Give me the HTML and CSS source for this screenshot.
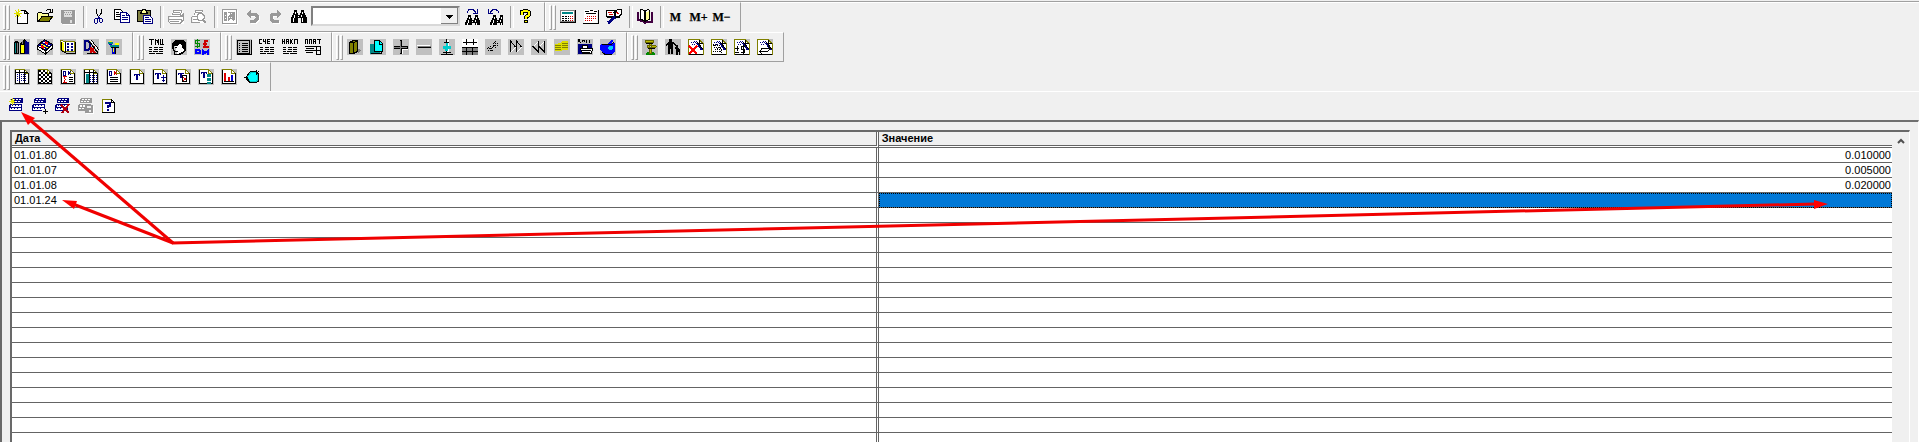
FILE: index.html
```html
<!DOCTYPE html>
<html lang="ru">
<head>
  <meta charset="UTF-8">
  <meta name="viewport" content="width=device-width, initial-scale=1.0">
  <title>История значения</title>
  <link rel="stylesheet" href="styles.css">
</head>
<body>
  <!-- shared icon parts -->
  <svg class="sprite" aria-hidden="true">
    <symbol id="page" viewBox="0 0 16 16"><path fill="#c0c0c0" d="M0 0h16v16H0z"/><path fill="#fff" d="M2 1h9l3 3v11H2z"/><path class="k" d="M1.500 0v14.500h13V4"/><path class="o" d="M1 .5h10M10.500 1v3.500H14M11.500 1.500L14 4"/></symbol>
    <symbol id="sheet" viewBox="0 0 16 16"><path fill="#c0c0c0" d="M0 0h16v16H0z"/><path fill="#fff" d="M1 1h10l4 4v10H1z"/><path class="o" d="M.5 16V.5H11l4 4V16"/><path class="k" d="M1 15.500h14M11 1v3h4"/></symbol>
    <symbol id="binoc" viewBox="0 0 16 16"><path d="M3 1h3v3h1v2h2V4h1V1h3v3h1v2h1v2h1v6h-6V9H7v5H0V8h1V6h1V4h1z"/><path class="w" d="M4.500 3v2M3.500 6v3M2.500 9v4M11.500 3v2M10.500 6v2M11.500 9v4M7 7.500h1"/></symbol>
    <symbol id="rows" viewBox="0 0 16 16"><path fill="#000080" d="M3 0h11v5H2V2zM1 6h12v7H0V8z"/><path class="w" stroke-dasharray="2 1" d="M4 1.500h9M3 3.500h9"/><path fill="#fff" d="M2 7h10v2H2zM1 10h11v2H1z"/><path class="n" stroke-dasharray="1 2" d="M3 7.500h9M2 10.500h9"/></symbol>
    <symbol id="lines" viewBox="0 0 16 16"><path class="k" d="M1 8.500h3M6 8.500h4M11 8.500h4M1 10.500h3M6 10.500h4M11 10.500h4M1 12.500h3M5 12.500h5M11 12.500h4M1 14.500h6M8 14.500h7"/></symbol>
    <symbol id="wand" viewBox="0 0 16 16"><use href="#sheet"/><path class="n2" d="M9 4l5 7"/><path class="k" d="M9.500 3l5 7"/><path class="n" stroke-dasharray="1 1" d="M3 3.500h6M4 5.500h4M6 2.500h4"/></symbol>
  </svg>

  <div class="app">
    <div class="toolbars">
      <div class="toolbar-row">
        <div class="band">
          <span class="grip"></span>
          <button aria-label="Создать"><svg viewBox="0 0 16 16"><path fill="#fff" d="M4 2h7l3 3v10H4z"/><path class="k" d="M3.500 6v8.500h10V4.500M7 1.500h4l3 3h-3.500V2"/><path class="y" d="M0 4.500h8M4.500 0v8M1 1l6 7M7 1L1 8"/></svg></button>
          <button aria-label="Открыть"><svg viewBox="0 0 16 16"><path fill="#ff9" d="M1 4h4l1 1h6v8H1z"/><path fill="#808000" d="M4 8h12l-4 5H1z"/><path class="k" d="M.5 13V4.500l1-1h3l1 1h6V8M4 7.500h12M4.500 8L1 13M15.500 7.500L12 12.500H.5M9 1.500l2-1h2l1 2M15.500 0v3H12"/></svg></button>
          <button aria-label="Сохранить" disabled><svg viewBox="0 0 16 16"><path fill="#fff" d="M2 2h14v14H3z"/><path fill="#999" d="M1 1h14v14H2l-1-1z"/><path fill="#ddd" d="M4 2h8v6H4zM10 11h2v3h-2z"/><path stroke="#999" stroke-dasharray="1 1" d="M4 3.500h8M5 5.500h7"/></svg></button>
          <span class="sep"></span>
          <button aria-label="Вырезать"><svg viewBox="0 0 16 16"><path class="k" d="M5.500 0v4l2 4M10.500 0v4l-3 4"/><path class="n" d="M7.500 7v3M5.500 9.500h-1l-1 1v3l1 1h1l1-1v-3l1-2 2 1h1l1 1v2l-1 1h-1l-1-1v-3"/></svg></button>
          <button aria-label="Копировать"><svg viewBox="0 0 16 16"><path fill="#fff" stroke="#000" d="M.5.500h6l3 3v7h-9z"/><path class="k" d="M2 3.500h3M2 5.500h5M2 7.500h4"/><path fill="#fff" stroke="#000080" d="M6.500 3.500h6l3 3v7h-9z"/><path class="n" d="M12.500 4v2.500H15M8 6.500h3M8 8.500h6M8 10.500h6"/></svg></button>
          <button aria-label="Вставить"><svg viewBox="0 0 16 16"><path fill="#808040" stroke="#000" d="M.5 1.500h13v11H.5z"/><path fill="#ff9" stroke="#000" d="M3.500 3.500h1l1-3h3l1 3h1v1h-7z"/><path fill="#fff" stroke="#000080" d="M6.500 6.500h6l3 3v5h-9z"/><path class="n" d="M8 8.500h4M8 10.500h6M8 12.500h6"/></svg></button>
          <span class="sep"></span>
          <button aria-label="Печать" disabled><svg viewBox="0 0 16 16"><path fill="#fff" d="M5 2h10l-1 5 2 2v6H2V8z"/><path class="g" d="M4.500 6l1-4.500h8L12.500 7M6 3.500h6M5 5.500h7M1 7.500h12l2-2v6l-3 3H2.500l-2-2v-4zM1 10.500h12v3M2 12.500h9M13 8l2-1"/></svg></button>
          <button aria-label="Просмотр" disabled><svg viewBox="0 0 16 16"><path fill="#fff" d="M4 2h8l-1 5 3 2v5H2V8z"/><path class="g" d="M3.500 6l1-4.500h7L10.500 5M5 3.500h5M1 7.500h5M.5 8v5.500h8M2 10.500h4M8 4.500h3l2 2v3l-2 2H8l-2-2v-3z"/><path stroke="#999" stroke-width="2" d="M12 11l3 3"/></svg></button>
          <span class="sep"></span>
          <button aria-label="Описание" disabled><svg viewBox="0 0 16 16"><path fill="#fff" d="M1 1h15v15H1z"/><path class="g" d="M.5.500h14v14H.5z"/><path fill="#999" d="M2 3h3v9H2zM6 3h7v7l-2 2-2-2-3 2V7l2-1z"/><path stroke="#fff" stroke-dasharray="1 1" d="M7 4.500h4M3 6.500h3M3 9.500h4M7 8.500h4"/></svg></button>
          <button aria-label="Отменить" disabled><svg viewBox="0 0 16 16"><path fill="none" stroke="#fff" stroke-width="3" d="M6 6h5l2 2v3l-2 2H6"/><path fill="none" stroke="#999" stroke-width="3" d="M5 5h5l2 2v3l-2 2H5"/><path fill="#999" d="M1 5l5-4v8z"/></svg></button>
          <button aria-label="Вернуть" disabled><svg viewBox="0 0 16 16"><path fill="none" stroke="#fff" stroke-width="3" d="M11 6H6L4 8v3l2 2h6"/><path fill="none" stroke="#999" stroke-width="3" d="M10 5H5L3 7v3l2 2h6"/><path fill="#999" d="M14 5L9 1v8z"/></svg></button>
          <button aria-label="Найти"><svg viewBox="0 0 16 16"><use href="#binoc"/></svg></button>
          <select class="search" aria-label="Строка поиска"><option></option></select>
          <button aria-label="Найти следующий"><svg viewBox="0 0 16 16"><path class="n" d="M3.500 4V2.500L5 .5h4l3 3M13.500 0v4H9"/><svg x="1" y="5" width="12" height="11" viewBox="0 0 16 16" preserveAspectRatio="none"><use href="#binoc"/></svg></svg></button>
          <button aria-label="Найти предыдущий"><svg viewBox="0 0 16 16"><path class="n" d="M1.500 0v4H6M3 3.500l3-3h3l2.500 2V4"/><svg x="3" y="5" width="12" height="11" viewBox="0 0 16 16" preserveAspectRatio="none"><use href="#binoc"/></svg></svg></button>
          <span class="sep"></span>
          <button aria-label="Помощь"><svg viewBox="0 0 16 16"><path fill="none" stroke="#000" stroke-width="4" d="M4 6V3l2-1h3l2 1v3L8 8v2"/><path fill="none" stroke="#ff0" stroke-width="2" d="M4 6V3l2-1h3l2 1v3L8 8v2"/><path fill="#ff0" stroke="#000" d="M6.500 11.500h3v2h-3z"/></svg></button>
        </div>
        <div class="band">
          <span class="grip"></span>
          <button aria-label="Калькулятор"><svg viewBox="0 0 16 16"><path fill="#fff" stroke="#808080" d="M.5 1.500h14v11H.5z"/><path class="k" d="M0 13.500h15.500V1"/><path fill="#088" d="M2 3h11v2H2z"/><path class="k" stroke-dasharray="2 1" d="M2 7.500h7M2 9.500h7M2 11.500h7"/><path class="r" stroke-dasharray="1 1" d="M10 7.500h4M10 9.500h4M10 11.500h4"/></svg></button>
          <button aria-label="Календарь"><svg viewBox="0 0 16 16"><path fill="#fff" d="M1 1h13v13H1z"/><path class="k" d="M0 14.500h15.500V1M2 2.500h4M7 1.500h3M11 2.500h3M3 4.500h10"/><path class="r" stroke-dasharray="1 1" d="M4 7.500h9M2 9.500h11M2 11.500h8"/></svg></button>
          <button aria-label="Табло"><svg viewBox="0 0 16 16"><path fill="#fff" stroke="#000" d="M.5 1.500h9v6h-9z"/><path fill="#fff" stroke="#000" d="M9.500 2.500l2-2h4v5l-2 2h-4z"/><path class="r" d="M2 3.500h4M3 5.500h4M10 3l3 2"/><path class="k" d="M8 1v6M7 4l4-2M12 8l3-3M1 8.500h13"/><path stroke="#000080" stroke-width="3" d="M2 14l7-6"/></svg></button>
          <span class="sep"></span>
          <button aria-label="Справка"><svg viewBox="0 0 16 16"><path fill="#fff" d="M3 1l5 2 5-2v10l-5 2-5-2z"/><path stroke="#400040" fill="none" stroke-width="2" d="M1 3v8l5 1 2 2 2-1h5V3"/><path class="k" d="M3.500 0v10l4 2V2l-3-2M12.500 1v9l-4 2V2l3-2"/><path fill="#ff9" d="M9 3l3-1v8l-3 1z"/></svg></button>
          <span class="sep"></span>
          <button class="mem">M</button>
          <button class="mem">M+</button>
          <button class="mem">M−</button>
        </div>
      </div>

      <div class="toolbar-row">
        <div class="band">
          <span class="grip"></span>
          <button aria-label="План счетов"><svg viewBox="0 0 16 16"><path class="bg" d="M0 0h16v16H0z"/><path fill="#000" d="M0 3l2-1 3 1v12H0zM6 4l4-4 2 1v14H6z"/><path fill="#000080" d="M11 2l4 1v12h-4z"/><path fill="#088" d="M1 4h1v10H1z"/><path fill="#808080" d="M3 4h1v10H3zM8 2h1v3H8z"/><path fill="#ff0" d="M7 6h3v8H7z"/></svg></button>
          <button aria-label="Журнал операций"><svg viewBox="0 0 16 16"><path class="bg" d="M0 0h16v16H0z"/><path fill="#000080" stroke="#000" d="M.5 6.500l7-6 8 5-7 6z"/><path fill="#fff" stroke="#000" d="M.5 7v3l8 5v-3zM8.500 12v3l7-6V6z"/><path stroke="#ff0" d="M4 5l7 4"/><path stroke="#fff" d="M6 3l7 4M2 7l6 3"/><path stroke="#f00" stroke-width="2" d="M8 3l3 2M4 7l3 2"/></svg></button>
          <button aria-label="Журнал проводок"><svg viewBox="0 0 16 16"><path class="bg" d="M0 0h16v16H0z"/><path fill="#fff" stroke="#808000" d="M.5 1.500l5 1h9v10h-9l-5-2z"/><path class="k" d="M5.500 3v11M1 11.500l5 2.500h9.500V3M1 3v8"/><path class="n2" stroke-dasharray="2 2" d="M7 5h7M7 8h7M7 11h7"/><path fill="#ff0" d="M2 3l2 1v8l-2-1z"/></svg></button>
          <button aria-label="Проводки"><svg viewBox="0 0 16 16"><path class="bg" d="M0 0h16v16H0z"/><path stroke="#000080" fill="none" stroke-width="2" d="M2 2v9M1 2h4l2 2v5l-2 2H1"/><path stroke="#c00" stroke-width="2" d="M8 15V8M8 12l4-4M9 11l4 4"/><path class="k" d="M8 1l8 10M6 2l9 12M4 14.500h11"/><path class="w" d="M7 1l8 10"/></svg></button>
          <button aria-label="Типовые операции"><svg viewBox="0 0 16 16"><path class="bg" d="M0 0h16v16H0z"/><path fill="#088" d="M2 3h5v2H2zM4 6h9v2H4z"/><path fill="#00c" d="M6 8h3v7H6zM3 5h3v1H3z"/><path fill="#ff0" d="M3 2h3v1H3zM9 4h4v2H9zM7 9h1v4H7z"/><path class="k" d="M5 8.500h8M9.500 9v6"/></svg></button>
        </div>
        <div class="band">
          <span class="grip"></span>
          <button aria-label="ТМЦ"><svg viewBox="0 0 16 16"><path class="k" d="M1 .5h5M3.500 1v5M7.500 6V0M7 1.500h2l0 2 1-2M10.500 0v6M12.500 0v5.500h3M14.500 0v6"/><use href="#lines"/></svg></button>
          <button aria-label="Контрагенты"><svg viewBox="0 0 16 16"><path class="bg" d="M0 0h16v16H0z"/><path fill="#fff" d="M3 3h10v9l-3 3H6z"/><path d="M1 5l3-4h8l3 3v8l-3 2 1-4-2-1V6L9 5 6 7H3v3H1z"/><path class="k" d="M2.500 8v3l1 1v3h5l3-2M4 12.500h3M4 8.500h2M12 14l-4 2"/></svg></button>
          <button aria-label="Валюты"><svg viewBox="0 0 16 16"><path class="bg" d="M0 0h16v16H0z"/><path stroke="#080" fill="none" d="M6 1.500H1.500v3h4v3H1M3.500 0v9"/><path stroke="#c00" fill="none" stroke-width="2" d="M14 2h-3v5l-2 1h6M9 5h4"/><path fill="none" stroke="#00f" stroke-width="2" d="M1 11h4l1 1v2H2v-3M9 16v-4l2 2 3-2v4"/></svg></button>
        </div>
        <div class="band">
          <span class="grip"></span>
          <button aria-label="Журнал"><svg viewBox="0 0 16 16"><path class="bg" d="M0 0h16v16H0z"/><path class="k" d="M1.500 1.500h12v13h-12zM3 4.500h1M6 4.500h6M3 6.500h1M6 6.500h6M3 8.500h1M6 8.500h6M3 10.500h1M6 10.500h6M3 12.500h1M6 12.500h6M15.500 1v14.500H1"/></svg></button>
          <button aria-label="Счет"><svg viewBox="0 0 16 16"><path class="k" d="M3 .5H.5v4H3M4.500 0v2.500h2V0v5M11 .5H8.500v4H11M9 2.500h2M12 .5h4M14.500 0v5"/><use href="#lines"/></svg></button>
          <button aria-label="Накладная"><svg viewBox="0 0 16 16"><path class="k" d="M.5 0v5M.5 2.500h2V0v5M4.500 5V.5h2V5M5 2.500h2M8.500 0v5M11 0L9 2.500 11 5M12.500 5V.5h3V5"/><use href="#lines"/></svg></button>
          <button aria-label="Платежное поручение"><svg viewBox="0 0 16 16"><path class="k" d="M.5 5V.5h2V5M4.500 5V.5h2V5M8.500 5V.5h2V5M9 2.500h2M12 .5h4M14.500 0v5M0 7.500h16M1 9.500h8M11.500 7v8.500h4V7M0 11.500h16M1 13.500h7"/></svg></button>
        </div>
        <div class="band">
          <span class="grip"></span>
          <button aria-label="Книга"><svg viewBox="0 0 16 16"><path class="bg" d="M0 0h16v16H0z"/><path fill="#808080" d="M11 14l3-2v-1l-3-1z"/><path fill="#808000" stroke="#000" d="M2.500 3.500l4-2h4v11l-4 2h-4z"/><path class="k" d="M6.500 4v11M3 3.500h4l4-2"/></svg></button>
          <button aria-label="Копия"><svg viewBox="0 0 16 16"><path class="bg" d="M0 0h16v16H0z"/><path fill="#088" d="M0 5h5v8h5v2H0z"/><path fill="#0ff" stroke="#000" d="M4.500 1.500h5l3 3v8h-8z"/><path class="k" d="M9.500 2v3H12M1 14.500h10V13"/></svg></button>
          <button aria-label="Добавить"><svg viewBox="0 0 16 16"><path class="bg" d="M0 0h16v16H0z"/><path fill="#000" d="M7 1h2v6h6v3H9v5H7v-5H1V7h6z"/><path fill="#808080" d="M7 2h1v6h6v1H8v5H7V9H1V8h6z"/><path class="w" d="M9.500 10v5M10 10.500h5"/></svg></button>
          <button aria-label="Убрать"><svg viewBox="0 0 16 16"><path class="bg" d="M0 0h16v16H0z"/><path fill="#808080" d="M2 7h13v1H2z"/><path class="k" d="M2 8.500h13"/><path class="w" d="M1 6.500h13"/></svg></button>
          <button aria-label="Выровнять"><svg viewBox="0 0 16 16"><path class="bg" d="M0 0h16v16H0z"/><path stroke="#fff" stroke-width="3" d="M8 1v13"/><path class="k" d="M7.500 0v4M5 3.500h5M7.500 11v4M4 13.500h8M2 15.500h12"/><path fill="#0cc" d="M7 4h2v3h3v3H9v2H6v-2H4V7h3z"/></svg></button>
          <button aria-label="Сетка"><svg viewBox="0 0 16 16"><path fill="#fff" d="M0 0h16v8H0z"/><path fill="#808080" d="M0 8h16v8H0z"/><path class="k" d="M1 3.500h14M4.500 0v6M11.500 0v6M0 8.500h16M0 12.500h16M4.500 8v8M10.500 8v8"/></svg></button>
          <button aria-label="Связь"><svg viewBox="0 0 16 16"><path class="bg" d="M0 0h16v16H0z"/><path class="k" stroke-dasharray="1 1" d="M2 9.500h6M3 11.500h5M5.500 7v6M8 4.500h6M10.500 2v7M8 6.500h6M9 3l4 4M3 8l4 4"/><path class="k" d="M6 10l4-4"/></svg></button>
          <button aria-label="Вперед"><svg viewBox="0 0 16 16"><path class="bg" d="M0 0h16v16H0z"/><path class="w" d="M3 13l5-5M9 13l5-5"/><path class="k" d="M2.500 13V2l5 6M8.500 13V2l5 6"/></svg></button>
          <button aria-label="Назад"><svg viewBox="0 0 16 16"><path class="bg" d="M0 0h16v16H0z"/><path class="w" d="M7 3L2 8M13 3L8 8"/><path class="k" d="M7.500 2v11l-6-6M13.500 2v11l-6-6"/></svg></button>
          <button aria-label="Деньги"><svg viewBox="0 0 16 16"><path class="bg" d="M0 0h16v16H0z"/><path fill="#dd0" d="M1 5l5-1 3-2h5v9H9l-3 1H1z"/><path class="o" d="M1 6.500h6M8 4.500h6M1 8.500h6M8 6.500h6M1 10.500h6M8 8.500h6"/></svg></button>
          <button aria-label="Касса"><svg viewBox="0 0 16 16"><path class="bg" d="M0 0h16v16H0z"/><path class="k" d="M1.500 0v3M3 0L2 2l2 2M5.500 3V1h2v2M9 .5v3h1M12 .5v3h1"/><path fill="#000080" d="M1 5h14v4h-3v6H1z"/><path fill="#fff" stroke="#000" d="M5.500 6.500h5v3h-5zM3.500 9.500h12l-1 5h-9z"/><path class="k" d="M5 11.500h9M6 13.500h7"/></svg></button>
          <button aria-label="Кошелек"><svg viewBox="0 0 16 16"><path class="bg" d="M0 0h16v16H0z"/><path fill="#00f" d="M1 5h4l1 1 2-2 4-3 1 1-2 2h4v8l-3 3H4l-4-4V6z"/><path fill="#0cf" d="M8 8l2-1h3v3l-2 1H9z"/><path class="k" d="M2 5.500h9l3-2M2 13l3 2.500h7"/></svg></button>
        </div>
        <div class="band">
          <span class="grip"></span>
          <button aria-label="Путеводитель"><svg viewBox="0 0 16 16"><path class="bg" d="M0 0h16v16H0z"/><path fill="#080" d="M4 14l4-2 5 2v2H4z"/><path fill="#bb0" stroke="#660" d="M3.500 1.500h8v2h-8zM5.500 6.500h8l1 1-1 1h-8zM7.500 3v11h2V3"/><path class="k" d="M4 4.500h7M6 9.500h7"/></svg></button>
          <button aria-label="Сотрудники"><svg viewBox="0 0 16 16"><path class="bg" d="M0 0h16v16H0z"/><path d="M4 0h3v3h1l3 3-1 1-2-2v10H6v-5H5v5H3V5L1 7 0 6l3-3h1zM11 6h2v3l2 2v5h-1v-3h-1v3h-2v-5l-1-1z"/></svg></button>
          <button aria-label="Удалить расчет"><svg viewBox="0 0 16 16"><use href="#wand"/><path stroke="#f00" stroke-width="2" d="M1 7l8 8M9 7l-8 8"/></svg></button>
          <button aria-label="Расчет"><svg viewBox="0 0 16 16"><use href="#wand"/><path class="k" stroke-dasharray="1 1" d="M2 6.500h7M3 8.500h7M4 10.500h7M2 5l9 9M5 5l7 8M2 12.500h7"/></svg></button>
          <button aria-label="Суммы"><svg viewBox="0 0 16 16"><use href="#wand"/><path class="k" d="M1 9.500h4M3.500 7v5M1 13.500h4M11 7.500H7.500v3h3v3H7M9.500 6v9"/></svg></button>
          <button aria-label="Обмен"><svg viewBox="0 0 16 16"><use href="#wand"/><path class="k" d="M4 9.500h9M11 7l2.500 2.500L11 12M2 12.500h9M5 10l-2.500 2.500L5 15"/></svg></button>
        </div>
      </div>

      <div class="toolbar-row last">
        <div class="band">
          <span class="grip"></span>
          <button aria-label="Сводные проводки"><svg viewBox="0 0 16 16"><use href="#page"/><path class="k" d="M1 3.500h13M5.500 1v14M10.500 1v14"/><path class="n" stroke-dasharray="1 1" d="M3 5.500h10M3 7.500h10M3 9.500h10M3 11.500h10"/></svg></button>
          <button aria-label="Шахматка"><svg viewBox="0 0 16 16"><use href="#page"/><path stroke="#000" stroke-width="2" stroke-dasharray="2 2" d="M2 2h8M4 4h10M2 6h12M4 8h10M2 10h12M4 12h10M2 14h12"/></svg></button>
          <button aria-label="Оборотная ведомость"><svg viewBox="0 0 16 16"><use href="#page"/><path class="n" d="M3.500 2v4h2V2.500H3M8.500 2v4M11 2L9 4l2 2"/><path class="k" d="M9 8.500h4M9 10.500h4M9 12.500h4"/><path class="r" d="M7 7.500H3.500l2 3-2 3H7"/></svg></button>
          <button aria-label="Оборотно-сальдовая ведомость"><svg viewBox="0 0 16 16"><use href="#page"/><path fill="#088" d="M3 5h3v9H3z"/><path class="k" d="M1 3.500h13M6.500 1v14M10.500 1v14"/><path class="n" stroke-dasharray="1 1" d="M7 6.500h7M7 8.500h7M7 10.500h7M7 12.500h7"/></svg></button>
          <button aria-label="Журнал-ордер"><svg viewBox="0 0 16 16"><use href="#page"/><path class="n" d="M3.500 2v4h2V2.500H3"/><path class="r" d="M8.500 2v4M11 2L9 4l2 2"/><path class="k" d="M4 8.500h8M4 10.500h8M4 12.500h8"/></svg></button>
          <button aria-label="Анализ счета"><svg viewBox="0 0 16 16"><use href="#page"/><path class="n" d="M5 5.500h6M5.500 5v2M10.500 5v2M7 10.500h2"/><path class="n2" d="M8 5v6"/></svg></button>
          <button aria-label="Карточка счета"><svg viewBox="0 0 16 16"><use href="#page"/><path class="n" d="M3 4.500h6M3.500 4v2M8.500 4v2M5 9.500h2M11.500 6v6M9 8.500h5M10 11l1.500 1.500L13 11"/><path class="n2" d="M6 4v6"/></svg></button>
          <button aria-label="Анализ по субконто"><svg viewBox="0 0 16 16"><use href="#page"/><path class="n" d="M3 4.500h6M3.500 4v2M5 8.500h2"/><path class="n2" d="M6 4v5"/><path fill="#fff" stroke="#000" d="M7.500 6.500h4v6h-4z"/><path class="r" d="M8 8l3 3M8 12l3-3"/></svg></button>
          <button aria-label="Обороты"><svg viewBox="0 0 16 16"><use href="#page"/><path class="n" d="M3 3.500h6M3.500 3v2M8.500 3v2M5 8.500h2"/><path class="n2" d="M6 3v6"/><path stroke="#088" stroke-width="4" stroke-dasharray="3 1" d="M11 5v10"/></svg></button>
          <button aria-label="Диаграмма"><svg viewBox="0 0 16 16"><use href="#page"/><path stroke="#d00" stroke-width="2" d="M4 4v8M8 8v4"/><path stroke="#00c" stroke-width="2" d="M11 6v6"/><path class="k" d="M3 12.500h10"/></svg></button>
          <button aria-label="Отчеты"><svg viewBox="0 0 16 16"><path fill="#0cc" stroke="#000" d="M1.500 8.500l5-6h5l3 2v8l-3 1h-6z"/><path fill="#0ff" d="M4 8l3-4h4l2 2v5l-2 1H6z"/><path class="k" d="M0 8.500h3l3 5M12.500 1v4L15 2"/></svg></button>
        </div>
      </div>

      <div class="form-bar">
        <button aria-label="Новая строка"><svg viewBox="0 0 16 16"><use href="#rows" width="16" height="16"/><path class="y" d="M0 3.500h6M3.500 0v7M1 1l5 5M6 1L1 6"/></svg></button>
        <button aria-label="Ввести строку"><svg viewBox="0 0 16 16"><use href="#rows" width="16" height="16"/><path fill="#f0f0f0" d="M10 11h4v2h-4z"/><path class="k" d="M11 13.500h5M13.500 11v5"/></svg></button>
        <button aria-label="Удалить строку"><svg viewBox="0 0 16 16"><use href="#rows" width="16" height="16"/><path stroke="#b00010" stroke-width="2" d="M6 7l8 8M14 6l-7 9"/></svg></button>
        <button aria-label="Записать" disabled><svg viewBox="0 0 16 16"><path fill="#999" d="M3 0h11v5H2V2zM1 6h12v7H0V8z"/><path class="w" stroke-dasharray="2 1" d="M4 1.500h9M3 3.500h9M2 7.500h10M2 8.500h10M1 10.500h7"/><path fill="#fff" d="M8 8h8v8H8z"/><path fill="#999" d="M7 7h8v8H7z"/><path fill="#eee" d="M9 8h4v2H9zM11 12h2v2h-2z"/></svg></button>
        <button aria-label="Описание формы"><svg viewBox="0 0 16 16"><path fill="#fff" d="M2 1h9l3 3v11H2z"/><path class="o" d="M1.500 15V1.500H10"/><path class="k" d="M1 14.500h12.500V4.500l-3-3M10.500 1v3.500H14"/><path fill="none" stroke="#000080" stroke-width="2" d="M5 6V5h4v3L7 8v2M7 11v2"/></svg></button>
      </div>
    </div>

    <main class="frame">
      <div class="grid">
        <table>
          <thead>
            <tr><th class="col-date">Дата</th><th>Значение</th></tr>
          </thead>
          <tbody>
            <tr><td>01.01.80</td><td class="num">0.010000</td></tr>
            <tr><td>01.01.07</td><td class="num">0.005000</td></tr>
            <tr><td>01.01.08</td><td class="num">0.020000</td></tr>
            <tr><td>01.01.24</td><td class="num selected"></td></tr>
            <tr><td></td><td></td></tr>
            <tr><td></td><td></td></tr>
            <tr><td></td><td></td></tr>
            <tr><td></td><td></td></tr>
            <tr><td></td><td></td></tr>
            <tr><td></td><td></td></tr>
            <tr><td></td><td></td></tr>
            <tr><td></td><td></td></tr>
            <tr><td></td><td></td></tr>
            <tr><td></td><td></td></tr>
            <tr><td></td><td></td></tr>
            <tr><td></td><td></td></tr>
            <tr><td></td><td></td></tr>
            <tr><td></td><td></td></tr>
            <tr><td></td><td></td></tr>
            <tr><td></td><td></td></tr>
          </tbody>
        </table>
        <div class="scrollbar">
          <button aria-label="Вверх"><svg class="chevron" viewBox="0 0 8 6"><path fill="none" stroke="#505050" stroke-width="2" d="M1 5l3-3 3 3"/></svg></button>
        </div>
      </div>
    </main>

    <!-- pointer arrows over the form -->
    <svg class="arrows" aria-hidden="true">
      <g stroke="#f00000" stroke-width="3">
        <path d="M173 243L30 120"/>
        <path d="M173 243L73 204"/>
        <path d="M172 243L1815 204"/>
      </g>
      <g fill="#ff0000">
        <path d="M21 112l14 6-7 7z"/>
        <path d="M62 200l15 1-3 8z"/>
        <path d="M1828 204l-14-4v9z"/>
      </g>
    </svg>
  </div>
</body>
</html>
```
FILE: styles.css
```css
* { box-sizing: border-box; }
body { margin: 0; background-color: #f0f0f0; color: #000; font-family: "Liberation Sans", Arial, sans-serif; font-size: 11px; }
.sprite { display: none; }
.app { position: relative; display: flex; flex-direction: column; height: 100vh; padding-top: 1px; overflow: hidden; }

/* toolbars */
.toolbars { border-top: 1px solid #a0a0a0; flex: none; }
.toolbar-row { display: flex; height: 30px; }
.toolbar-row:first-child { box-shadow: inset 0 1px #fff; }
.toolbar-row.last { border-bottom: 1px solid #fff; }
.band { display: flex; align-items: center; padding: 0 7px 0 4px; border-top: 1px solid #fff; border-bottom: 1px solid #a0a0a0; border-right: 1px solid #a0a0a0; }
.band:first-child { padding-left: 3px; }
.last .band { border-bottom: none; }
.band + .band { box-shadow: inset 1px 0 #fff; }
.grip { width: 7px; height: 25px; display: flex; gap: 1px; }
.grip::before, .grip::after { content: ""; width: 3px; border: 1px solid #fff; border-right-color: #a0a0a0; border-bottom-color: #a0a0a0; }
.sep { width: 8px; height: 22px; display: flex; justify-content: center; }
.sep::before { content: ""; width: 2px; border-left: 1px solid #a0a0a0; border-right: 1px solid #fff; margin-left: 3px; }
button { width: 23px; height: 22px; padding: 0 3px 0 4px; margin: 0; border: none; background: none; display: flex; align-items: center; justify-content: center; flex: none; color: #000; }
button svg { width: 16px; height: 16px; display: block; shape-rendering: crispEdges; flex: none; }
button.mem { padding: 0; font: bold 12px "Liberation Serif", "Times New Roman", serif; -webkit-text-stroke: 1px #000; -webkit-text-stroke-width: thin; }
.search { appearance: none; width: 149px; height: 20px; margin: 0 0 2px 1px; border: 2px solid; border-color: #808080 #d8d8d8 #d8d8d8 #808080; border-radius: 0; outline: none; background: linear-gradient(#000, #000) right 5px top 7px / 7px 1px no-repeat, linear-gradient(#000, #000) right 6px top 8px / 5px 1px no-repeat, linear-gradient(#000, #000) right 7px top 9px / 3px 1px no-repeat, linear-gradient(#000, #000) right 8px top 10px / 1px 1px no-repeat, linear-gradient(#808080, #808080) right / 1px 100% no-repeat, linear-gradient(#808080, #808080) right bottom / 17px 1px no-repeat, linear-gradient(#f0f0f0, #f0f0f0) right / 17px 100% no-repeat, #fff; }
.form-bar { display: flex; align-items: center; height: 28px; padding-left: 5px; }

/* icon strokes */
.k { fill: none; stroke: #000; }
.n { fill: none; stroke: #000080; }
.n2 { fill: none; stroke: #000080; stroke-width: 2px; }
.o { fill: none; stroke: #808000; }
.y { fill: none; stroke: #e0e000; }
.r { fill: none; stroke: #d00000; }
.w { fill: none; stroke: #fff; }
.g { fill: none; stroke: #999; }
.bg { fill: #c0c0c0; }

/* form */
.frame { flex: 1; min-height: 0; padding: 8px 8px 0; border: 2px solid #696969; border-top-color: #707070; border-right: 1px solid #fff; border-bottom: none; overflow: hidden; }
.grid { display: flex; border: 2px solid #696969; border-right: 1px solid #fff; border-bottom: none; }
table { flex: 1; table-layout: fixed; border-collapse: separate; border-spacing: 0; background-color: #fff; }
th, td { padding: 0 2px; line-height: 13px; white-space: nowrap; overflow: hidden; }
th { height: 16px; padding: 0 3px; background-color: #f0f0f0; border-bottom: 3px double #646464; background-clip: padding-box; text-align: left; }
td { height: 15px; border-bottom: 1px solid #646464; line-height: 13px; }
th:first-child, td:first-child { border-right: 3px double #646464; }
.col-date { width: 46.1%; }
.num { padding-right: 1px; text-align: right; }
.selected { background-color: #0078d7; outline: 1px dotted #000; outline-offset: -1px; }
.scrollbar { width: 17px; background-color: #f0f0f0; }
.scrollbar button { width: 17px; height: 17px; padding: 0; }
.scrollbar .chevron { width: 8px; height: 6px; shape-rendering: auto; }

.arrows { position: absolute; left: 0; top: 0; width: 100%; height: 260px; pointer-events: none; }
```
